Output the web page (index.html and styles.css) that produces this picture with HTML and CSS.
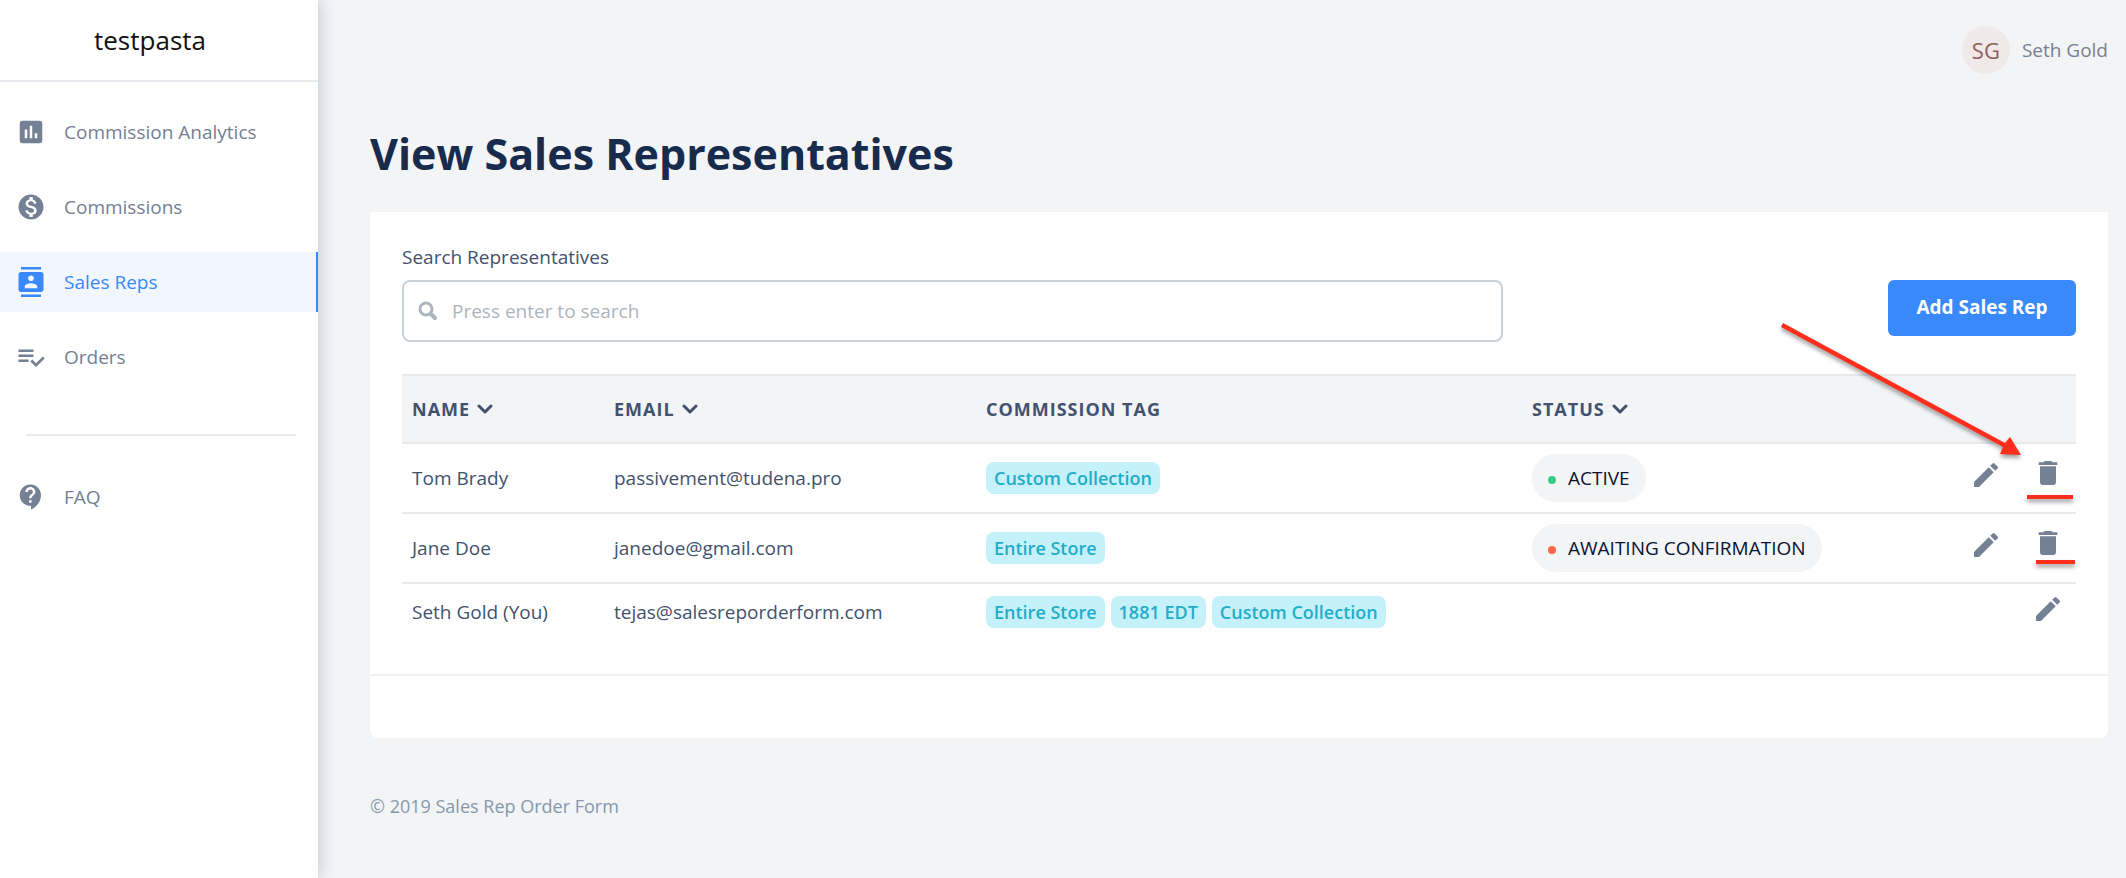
FILE: index.html
```html
<!DOCTYPE html>
<html lang="en">
<head>
<meta charset="utf-8">
<title>View Sales Representatives</title>
<link rel="stylesheet" href="styles.css">
</head>
<body>
<svg class="sprite" aria-hidden="true">
  <symbol id="chevron" viewBox="0 0 16 10"><path d="M2 2l6 6 6-6" fill="none" stroke="currentColor" stroke-width="3" stroke-linecap="round" stroke-linejoin="round"/></symbol>
  <symbol id="pencil" viewBox="0 0 24 24"><path d="M3 17.25V21h3.75L17.81 9.94l-3.75-3.75L3 17.25zM20.71 7.04a1 1 0 0 0 0-1.41l-2.34-2.34a1 1 0 0 0-1.41 0l-1.83 1.83 3.75 3.75 1.83-1.83z"/></symbol>
  <symbol id="trash" viewBox="0 0 24 24"><path d="M6 19c0 1.100.9 2 2 2h8c1.100 0 2-.9 2-2V7H6v12zM19 4h-3.500l-1-1h-5l-1 1H5v2h14V4z"/></symbol>
</svg>
<div class="layout">
  <aside class="sidebar">
    <div class="brand">testpasta</div>
    <nav class="nav">
      <a class="nav-item" href="#analytics"><svg class="nav-icon" viewBox="0 0 24 24"><path d="M19 3H5c-1.100 0-2 .9-2 2v14c0 1.100.9 2 2 2h14c1.100 0 2-.9 2-2V5c0-1.100-.9-2-2-2zM9 17H7v-7h2v7zm4 0h-2V7h2v10zm4 0h-2v-4h2v4z"/></svg>Commission Analytics</a>
      <a class="nav-item" href="#commissions"><svg class="nav-icon" viewBox="0 0 24 24"><path d="M12 2C6.480 2 2 6.480 2 12s4.480 10 10 10 10-4.480 10-10S17.520 2 12 2zm1.410 16.090V20h-2.670v-1.930c-1.710-.36-3.160-1.460-3.270-3.400h1.960c.1 1.050.82 1.870 2.650 1.870 1.960 0 2.400-.98 2.400-1.590 0-.83-.44-1.610-2.670-2.140-2.480-.6-4.180-1.620-4.180-3.670 0-1.720 1.390-2.840 3.110-3.210V4h2.670v1.950c1.860.45 2.790 1.860 2.850 3.390H14.300c-.05-1.110-.64-1.870-2.220-1.870-1.500 0-2.400.68-2.400 1.640 0 .84.65 1.390 2.670 1.910s4.180 1.390 4.180 3.910c-.01 1.830-1.380 2.830-3.120 3.160z"/></svg>Commissions</a>
      <a class="nav-item active" href="#reps" aria-current="page"><svg class="nav-icon" viewBox="0 0 24 24"><path d="M20 0H4v2h16V0zM4 24h16v-2H4v2zM20 4H4c-1.100 0-2 .9-2 2v12c0 1.100.9 2 2 2h16c1.100 0 2-.9 2-2V6c0-1.100-.9-2-2-2zm-8 2.750a2.250 2.250 0 1 1 0 4.500 2.250 2.250 0 0 1 0-4.500zM17 17H7v-1.500c0-1.670 3.330-2.500 5-2.500s5 .83 5 2.500V17z"/></svg>Sales Reps</a>
      <a class="nav-item" href="#orders"><svg class="nav-icon" viewBox="0 0 24 24"><path d="M14 10H2v2h12v-2zm0-4H2v2h12V6zM2 16h8v-2H2v2zm19.500-4.500L23 13l-6.990 7-4.510-4.500L13 14l3.010 3 5.490-5.500z"/></svg>Orders</a>
      <hr class="nav-rule">
      <a class="nav-item" href="#faq"><svg class="nav-icon" viewBox="0 0 24 24"><path d="M11.500 2C6.810 2 3 5.810 3 10.500S6.810 19 11.500 19h.5v3c4.860-2.340 8-7 8-11.500C20 5.810 16.190 2 11.500 2zm1 14.500h-2v-2h2v2zm0-3.500h-2c0-3.250 3-3 3-5 0-1.100-.9-2-2-2s-2 .9-2 2h-2c0-2.210 1.790-4 4-4s4 1.790 4 4c0 2.500-3 2.750-3 5z"/></svg>FAQ</a>
    </nav>
  </aside>
  <main class="main">
    <header class="topbar">
      <span class="avatar">SG</span>
      <span class="user">Seth Gold</span>
    </header>
    <h1 class="title">View Sales Representatives</h1>
    <section class="card">
      <div class="card-body">
        <label class="label" for="search">Search Representatives</label>
        <div class="tools">
          <div class="search">
            <svg class="search-icon" viewBox="0 0 20 20"><circle cx="8" cy="8" r="6" fill="none" stroke="currentColor" stroke-width="3"/><path d="M12.500 12.500L17 17" stroke="currentColor" stroke-width="4" stroke-linecap="round"/></svg>
            <input class="search-input" id="search" type="text" placeholder="Press enter to search">
          </div>
          <button class="add" type="button">Add Sales Rep</button>
        </div>
        <table class="table">
          <colgroup><col class="c-name"><col class="c-email"><col class="c-tag"><col><col class="c-actions"></colgroup>
          <thead>
            <tr>
              <th scope="col">NAME<svg class="chevron"><use href="#chevron"/></svg></th>
              <th scope="col">EMAIL<svg class="chevron"><use href="#chevron"/></svg></th>
              <th scope="col">COMMISSION TAG</th>
              <th scope="col">STATUS<svg class="chevron"><use href="#chevron"/></svg></th>
              <th></th>
            </tr>
          </thead>
          <tbody>
            <tr>
              <td>Tom Brady</td>
              <td>passivement@tudena.pro</td>
              <td><div class="tags"><span class="tag">Custom Collection</span></div></td>
              <td><span class="status"><span class="dot ok"></span>ACTIVE</span></td>
              <td><div class="actions"><button class="icon-btn" type="button" aria-label="Edit"><svg class="icon"><use href="#pencil"/></svg></button><button class="icon-btn delete" type="button" aria-label="Delete"><svg class="icon"><use href="#trash"/></svg></button></div></td>
            </tr>
            <tr>
              <td>Jane Doe</td>
              <td>janedoe@gmail.com</td>
              <td><div class="tags"><span class="tag">Entire Store</span></div></td>
              <td><span class="status"><span class="dot wait"></span>AWAITING CONFIRMATION</span></td>
              <td><div class="actions"><button class="icon-btn" type="button" aria-label="Edit"><svg class="icon"><use href="#pencil"/></svg></button><button class="icon-btn delete" type="button" aria-label="Delete"><svg class="icon"><use href="#trash"/></svg></button></div></td>
            </tr>
            <tr class="last">
              <td>Seth Gold (You)</td>
              <td>tejas@salesreporderform.com</td>
              <td><div class="tags"><span class="tag">Entire Store</span><span class="tag">1881 EDT</span><span class="tag">Custom Collection</span></div></td>
              <td></td>
              <td><div class="actions"><button class="icon-btn" type="button" aria-label="Edit"><svg class="icon"><use href="#pencil"/></svg></button></div></td>
            </tr>
          </tbody>
        </table>
      </div>
      <div class="card-foot"></div>
      <svg class="marks" viewBox="0 0 340 260" aria-hidden="true">
        <g fill="#ff2d1c">
          <path d="M13 115L15 111 237 231 242 225 253 243 232 242 235 235z"/>
          <path d="M259 283h46v4h-46zM268 348h39v4h-39z"/>
        </g>
      </svg>
    </section>
    <footer class="footer">© 2019 Sales Rep Order Form</footer>
  </main>
</div>
</body>
</html>
```
FILE: styles.css
```css
* { box-sizing: border-box; }
body {
  margin: 0;
  background: #f2f4f6;
  color: #42526e;
  font: 19px/28px "Open Sans", "Noto Sans", sans-serif;
}
.sprite { display: none; }
.layout { display: flex; min-height: 100vh; }
.sidebar {
  flex: 0 0 318px;
  background: #fff;
  box-shadow: 0 0 16px rgba(60, 75, 105, 0.3);
}
.brand {
  height: 82px;
  padding: 20px 18px 0 0;
  border-bottom: 2px solid #e8eaef;
  color: #111;
  font-size: 26px;
  line-height: 40px;
  text-align: center;
}
.nav { display: flex; flex-direction: column; gap: 15px; padding-top: 20px; }
.nav-item {
  display: flex;
  align-items: center;
  gap: 18px;
  height: 60px;
  padding-left: 16px;
  color: #748094;
  text-decoration: none;
}
.nav-item.active { background: #f1f6ff; border-right: 2px solid #3989fb; color: #3989fb; }
.nav-icon { width: 30px; height: 30px; fill: currentColor; }
.nav-rule { width: 270px; height: 2px; margin: 32px 0 16px 26px; border: 0; background: #e8eaef; }
.main { flex: 1; min-width: 0; padding: 26px 18px 0 52px; }
.topbar { display: flex; justify-content: flex-end; align-items: center; gap: 12px; color: #748094; }
.avatar {
  width: 48px;
  height: 48px;
  border-radius: 50%;
  background: #f0e9e9;
  color: #8d6160;
  font-size: 22px;
  line-height: 48px;
  text-align: center;
}
.title { margin: 50px 0 28px; color: #172b4d; font-size: 43px; line-height: 60px; font-weight: 700; }
.card { position: relative; background: #fff; border-radius: 2px 2px 8px 8px; }
.card-body { padding: 31px 32px 34px; }
.label { display: block; margin-bottom: 9px; }
.tools { display: flex; justify-content: space-between; align-items: flex-start; margin-bottom: 32px; }
.search {
  display: flex;
  align-items: center;
  gap: 14px;
  width: 65.8%;
  height: 62px;
  padding: 0 14px;
  border: 2px solid #c9d0d6;
  border-radius: 8px;
}
.search-icon { flex: none; width: 20px; height: 20px; color: #abb5be; }
.search-input { flex: 1; padding: 0; border: 0; outline: 0; background: none; color: #42526e; font: inherit; }
.search-input::placeholder { color: #abb5be; opacity: 1; }
.add {
  width: 188px;
  height: 56px;
  padding: 0 0 2px;
  border: 0;
  border-radius: 6px;
  background: #3989fb;
  color: #fff;
  font: 700 19px/28px "Open Sans", "Noto Sans", sans-serif;
}
.table { width: 100%; table-layout: fixed; border-collapse: separate; border-spacing: 0; }
.c-name { width: 202px; }
.c-email { width: 372px; }
.c-tag { width: 546px; }
.c-actions { width: 180px; }
th, td { height: 70px; padding: 0 10px; border-bottom: 2px solid #e6eaed; text-align: left; vertical-align: middle; }
th {
  background: #f2f4f6;
  border-top: 2px solid #e6eaed;
  font-size: 18px;
  letter-spacing: 1px;
}
.last td { height: 56px; border: 0; }
.chevron { width: 16px; height: 10px; margin-left: 7px; vertical-align: 2px; }
.tags { display: flex; gap: 6px; }
.tag {
  padding: 0 8px;
  border-radius: 8px;
  background: #c5f1fa;
  color: #22adc9;
  font-size: 18px;
  line-height: 32px;
  font-weight: 600;
}
.status {
  display: inline-flex;
  align-items: center;
  gap: 12px;
  height: 48px;
  padding: 0 16px;
  border-radius: 24px;
  background: #f2f4f6;
  color: #091330;
  vertical-align: middle;
}
.dot { width: 8px; height: 8px; margin-top: 4px; border-radius: 50%; }
.ok { background: #36cb87; }
.wait { background: #ff6645; }
.actions { display: flex; justify-content: flex-end; align-items: center; gap: 30px; padding: 0 2px 6px 0; }
.icon-btn { width: 32px; height: 32px; padding: 0; border: 0; background: none; color: #748094; }
.delete { margin-bottom: 4px; }
.icon { display: block; width: 32px; height: 32px; fill: currentColor; }
.card-foot { height: 64px; border-top: 2px solid #eff1f3; }
.marks {
  position: absolute;
  top: 0;
  right: 0;
  width: 340px;
  height: 260px;
  overflow: visible;
  pointer-events: none;
  filter: drop-shadow(0 3px 2px rgba(0, 0, 0, 0.4));
}
.footer { padding: 54px 0 0; color: #8798ab; font-size: 18px; }
```
